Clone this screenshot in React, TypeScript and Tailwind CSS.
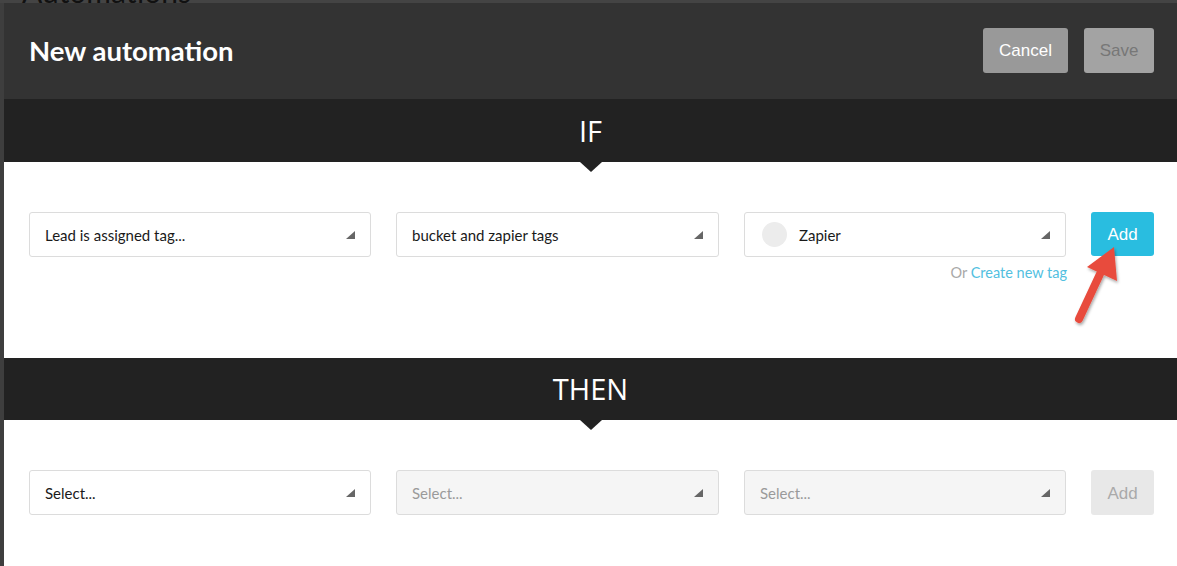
import React from "react";

const Caret = () => (
  <svg width="9" height="8" viewBox="0 0 9 8" className="shrink-0">
    <polygon points="9,0 9,8 0,8" fill="#666" />
  </svg>
);

function Select({
  w,
  text,
  disabled,
  circle,
}: {
  w: string;
  text: string;
  disabled?: boolean;
  circle?: boolean;
}) {
  return (
    <div
      className={`${w} h-[45px] rounded-[3px] border border-[#dcdcdc] flex items-center justify-between pl-[15px] pr-[15px] ${
        disabled ? "bg-[#f5f5f5] text-[#9a9a9a]" : "bg-white text-[#1a1a1a]"
      }`}
    >
      <div className="flex items-center gap-[12px] pt-[2px]">
        {circle && <div className="w-[25px] h-[25px] rounded-full bg-[#ececec] ml-[2px] -mt-[2px]" />}
        <span className="text-[15px]">{text}</span>
      </div>
      <Caret />
    </div>
  );
}

export default function App() {
  return (
    <div
      className="w-[1177px] h-[566px] overflow-hidden bg-[#3e3e3e] relative"
      style={{ fontFamily: "Lato, 'Noto Sans', sans-serif" }}
    >
      <div className="h-[3px] overflow-hidden bg-[#444] pl-[22px]">
        <div className="text-[30px] leading-[30px] -mt-[24px] text-[#111] font-normal">Automations</div>
      </div>
      <div className="ml-[4px] bg-white flex flex-col">
        <div className="h-[96px] bg-[#333333] flex items-center justify-between pl-[25px] pr-[23px]">
          <h1 className="text-white font-bold text-[27.5px] -mt-[1px]">New automation</h1>
          <div className="flex gap-[16px] -mt-[2px]" style={{ fontFamily: "'Liberation Sans', Arial, sans-serif" }}>
            <button className="w-[85px] h-[45px] rounded-[3px] bg-[#999999] text-white text-[17px] pt-[2px]">Cancel</button>
            <button className="w-[70px] h-[45px] rounded-[3px] bg-[#a3a3a3] text-[#777] text-[17px] pt-[2px]">Save</button>
          </div>
        </div>
        <div className="h-[63px] bg-[#222222] relative flex items-center justify-center">
          <span
            className="text-white text-[29px] font-normal"
            style={{ fontFamily: "'Open Sans', 'Noto Sans', sans-serif" }}
          >
            IF
          </span>
          <div className="absolute left-[576px] top-[63px] w-0 h-0 border-l-[11px] border-r-[11px] border-t-[10px] border-l-transparent border-r-transparent border-t-[#222222]" />
        </div>
        <div className="h-[196px] pt-[50px] pl-[25px] relative">
          <div className="flex items-start">
            <Select w="w-[342px]" text="Lead is assigned tag..." />
            <div className="w-[25px]" />
            <Select w="w-[323px]" text="bucket and zapier tags" />
            <div className="w-[25px]" />
            <div className="flex flex-col items-end">
              <Select w="w-[322px]" text="Zapier" circle />
              <div className="text-[14.5px] mt-[5px] -mr-[1px] font-normal">
                <span className="text-[#a8a8a8]">Or </span>
                <span className="text-[#52bfdf]">Create new tag</span>
              </div>
            </div>
            <button
              className="ml-[25px] w-[63px] h-[44px] rounded-[3px] bg-[#29bde0] text-white text-[17px] pt-[2px]"
              style={{ fontFamily: "'Liberation Sans', Arial, sans-serif" }}
            >
              Add
            </button>
          </div>
        </div>
        <div className="h-[62px] bg-[#222222] relative flex items-center justify-center">
          <span
            className="text-white text-[29px] font-normal"
            style={{ fontFamily: "'Open Sans', 'Noto Sans', sans-serif" }}
          >
            THEN
          </span>
          <div className="absolute left-[576px] top-[62px] w-0 h-0 border-l-[11px] border-r-[11px] border-t-[10px] border-l-transparent border-r-transparent border-t-[#222222]" />
        </div>
        <div className="h-[146px] pt-[50px] pl-[25px]">
          <div className="flex items-start">
            <Select w="w-[342px]" text="Select..." />
            <div className="w-[25px]" />
            <Select w="w-[323px]" text="Select..." disabled />
            <div className="w-[25px]" />
            <Select w="w-[322px]" text="Select..." disabled />
            <button
              className="ml-[25px] w-[63px] h-[45px] rounded-[3px] bg-[#e8e8e8] text-[#aaaaaa] text-[17px] pt-[2px]"
              style={{ fontFamily: "'Liberation Sans', Arial, sans-serif" }}
            >
              Add
            </button>
          </div>
        </div>
      </div>
      <svg className="absolute left-0 top-0 pointer-events-none" width="1177" height="566">
        <defs>
          <filter id="sh" x="-50%" y="-50%" width="200%" height="200%">
            <feDropShadow dx="1" dy="2" stdDeviation="1.5" floodColor="#000" floodOpacity="0.35" />
          </filter>
        </defs>
        <g filter="url(#sh)">
          <line x1="1079" y1="319" x2="1100" y2="274" stroke="#e84c3d" strokeWidth="8" strokeLinecap="round" />
          <polygon points="1114,247 1117,281 1087,267" fill="#e84c3d" />
        </g>
      </svg>
    </div>
  );
}
